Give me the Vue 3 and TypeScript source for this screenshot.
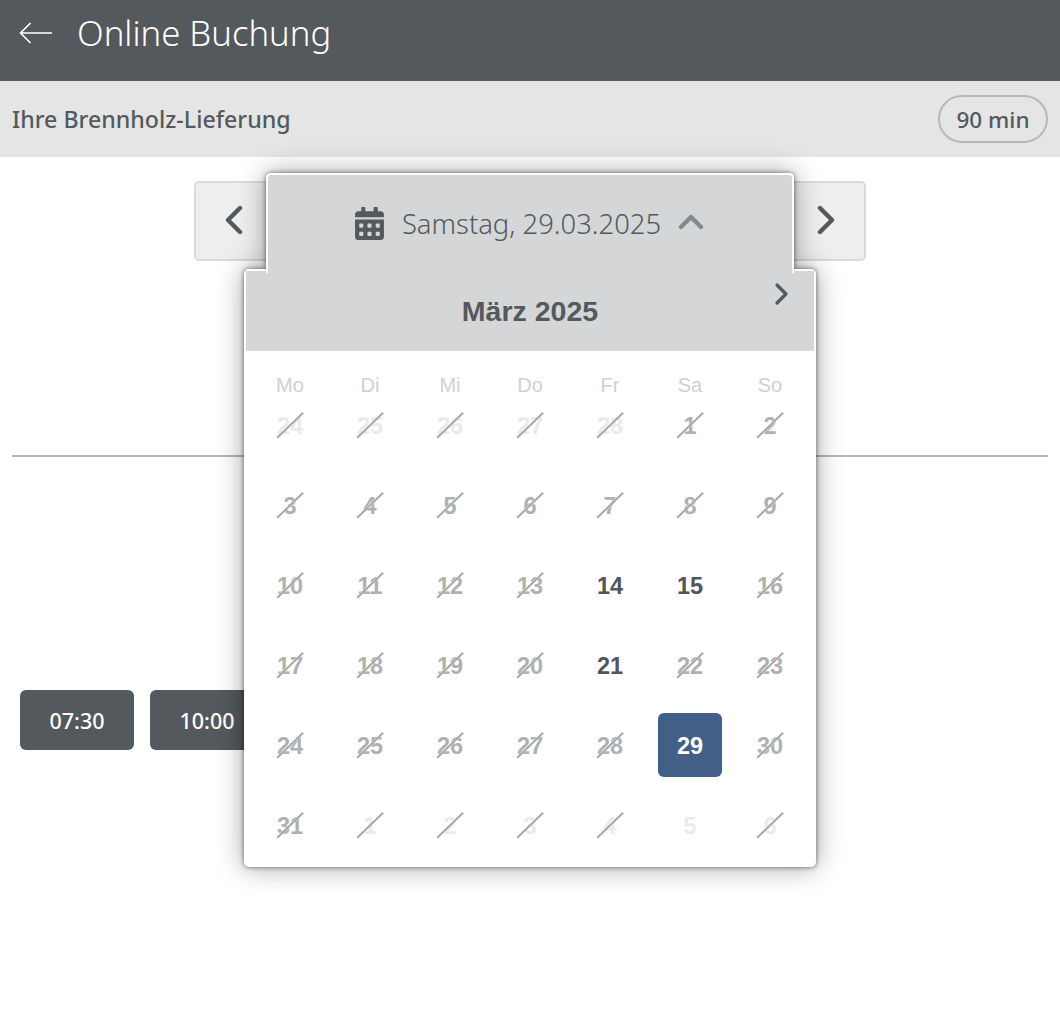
<script setup lang="ts">
type DayState = 'out' | 'off' | 'free' | 'selected'

interface Day {
  label: number
  state: DayState
  struck: boolean
}

const weekdays = ['Mo', 'Di', 'Mi', 'Do', 'Fr', 'Sa', 'So']
const times = ['07:30', '10:00']
const freeDays = [14, 15, 21]

const days: Day[] = []
for (const label of [24, 25, 26, 27, 28]) {
  days.push({ label, state: 'out', struck: true })
}
for (let label = 1; label <= 31; label++) {
  let state: DayState = 'off'
  if (freeDays.includes(label)) state = 'free'
  if (label === 29) state = 'selected'
  days.push({ label, state, struck: state === 'off' })
}
for (const label of [1, 2, 3, 4, 5, 6]) {
  days.push({ label, state: 'out', struck: label !== 5 })
}
</script>

<template>
  <div class="page">
    <header class="topbar">
      <svg class="back" width="34" height="24" viewBox="0 0 34 24" fill="none" stroke="#fff" stroke-width="1.6">
        <path d="M33 12H2M11.500 2 1.500 12l10 10" />
      </svg>
      <h1 class="title">Online Buchung</h1>
    </header>

    <div class="subbar">
      <span class="subbar__name">Ihre Brennholz-Lieferung</span>
      <span class="pill">90 min</span>
    </div>

    <div class="datenav">
      <button class="navbtn" type="button">
        <svg width="20" height="32" viewBox="0 0 20 32" fill="none" stroke="#53595c" stroke-width="4.400" stroke-linecap="round" stroke-linejoin="round">
          <path d="M16 3 4 15l12 12" />
        </svg>
      </button>

      <div class="picker">
        <div class="trigger">
          <svg width="29" height="33" viewBox="0 0 448 512" fill="#53595c">
            <path d="M0 464c0 26.500 21.500 48 48 48h352c26.500 0 48-21.500 48-48V192H0v272zm320-196c0-6.600 5.400-12 12-12h40c6.600 0 12 5.400 12 12v40c0 6.600-5.400 12-12 12h-40c-6.600 0-12-5.400-12-12v-40zm0 128c0-6.600 5.400-12 12-12h40c6.600 0 12 5.400 12 12v40c0 6.600-5.400 12-12 12h-40c-6.600 0-12-5.400-12-12v-40zM192 268c0-6.600 5.400-12 12-12h40c6.600 0 12 5.400 12 12v40c0 6.600-5.400 12-12 12h-40c-6.600 0-12-5.400-12-12v-40zm0 128c0-6.600 5.400-12 12-12h40c6.600 0 12 5.400 12 12v40c0 6.600-5.400 12-12 12h-40c-6.600 0-12-5.400-12-12v-40zM64 268c0-6.600 5.400-12 12-12h40c6.600 0 12 5.400 12 12v40c0 6.600-5.400 12-12 12H76c-6.600 0-12-5.400-12-12v-40zm0 128c0-6.600 5.400-12 12-12h40c6.600 0 12 5.400 12 12v40c0 6.600-5.400 12-12 12H76c-6.600 0-12-5.400-12-12v-40zM400 64h-48V16c0-8.800-7.200-16-16-16h-32c-8.800 0-16 7.200-16 16v48H160V16c0-8.800-7.200-16-16-16h-32c-8.800 0-16 7.200-16 16v48H48C21.500 64 0 85.500 0 112v48h448v-48c0-26.500-21.500-48-48-48z" />
          </svg>
          <span class="trigger__text">Samstag, 29.03.2025</span>
          <svg class="trigger__chevron" width="28" height="18" viewBox="0 0 28 18" fill="none" stroke="#84888a" stroke-width="4.400" stroke-linecap="round" stroke-linejoin="round">
            <path d="M4 14 14 4l10 10" />
          </svg>
        </div>

        <div class="calendar">
          <div class="calendar__head">
            <span class="calendar__month">März 2025</span>
            <svg class="calendar__next" width="16" height="24" viewBox="0 0 16 24" fill="none" stroke="#53595c" stroke-width="3.200" stroke-linecap="round" stroke-linejoin="round">
              <path d="M3 3l9 9-9 9" />
            </svg>
          </div>
          <div class="calendar__weekdays">
            <span v-for="w in weekdays" :key="w">{{ w }}</span>
          </div>
          <div class="calendar__grid">
            <div
              v-for="(d, i) in days"
              :key="i"
              class="day"
              :class="[`day--${d.state}`, { 'day--struck': d.struck }]"
            >
              <span class="day__num">{{ d.label }}</span>
            </div>
          </div>
        </div>
      </div>

      <button class="navbtn" type="button">
        <svg width="20" height="32" viewBox="0 0 20 32" fill="none" stroke="#53595c" stroke-width="4.400" stroke-linecap="round" stroke-linejoin="round">
          <path d="M4 3l12 12L4 27" />
        </svg>
      </button>
    </div>

    <hr class="divider" />

    <div class="times">
      <button v-for="t in times" :key="t" class="time" type="button">{{ t }}</button>
    </div>
  </div>
</template>

<style scoped>
.page {
  min-height: 1034px;
  background: #fff;
  font-family: "Noto Sans", "Open Sans", sans-serif;
  color: #53595c;
  overflow: hidden;
}

.topbar {
  display: flex;
  align-items: center;
  height: 81px;
  padding: 0 0 15px 19px;
  box-sizing: border-box;
  background: #53595c;
  color: #fff;
}

.back {
  margin-right: 24px;
}

.title {
  margin: 0;
  font-size: 34.700px;
  font-weight: 300;
  line-height: 1;
}

.subbar {
  display: flex;
  align-items: center;
  justify-content: space-between;
  height: 76px;
  padding: 0 12px;
  background: #e5e5e5;
}

.subbar__name {
  font-size: 23.200px;
  font-weight: 500;
}

.pill {
  display: flex;
  align-items: center;
  justify-content: center;
  box-sizing: border-box;
  width: 110px;
  height: 48px;
  border: 2px solid #b5b9bb;
  border-radius: 24px;
  font-size: 22.500px;
  font-weight: 500;
}

.datenav {
  display: flex;
  justify-content: center;
  height: 80px;
  margin-top: 24px;
}

.navbtn {
  display: flex;
  align-items: center;
  justify-content: center;
  width: 80px;
  height: 80px;
  padding: 0;
  border: 2px solid #dadada;
  border-radius: 5px;
  background: #eeeeee;
}

.picker {
  position: relative;
  z-index: 2;
  width: 528px;
  height: 80px;
  margin: 0 -8px;
}

.trigger {
  position: absolute;
  top: -8px;
  left: 0;
  z-index: 2;
  display: flex;
  align-items: center;
  justify-content: center;
  gap: 18px;
  box-sizing: border-box;
  width: 100%;
  height: 100px;
  padding-bottom: 2px;
  border: 2px solid #fff;
  border-bottom: 0;
  border-radius: 5px 5px 0 0;
  background: #d5d6d8;
}

.picker::before {
  content: "";
  position: absolute;
  top: -8px;
  left: 0;
  width: 100%;
  height: 96px;
  border-radius: 5px 5px 0 0;
  box-shadow: 0 0 28px rgba(0, 0, 0, 0.36), 0 0 5px rgba(0, 0, 0, 0.55);
}

.trigger__text {
  font-size: 27.400px;
  font-weight: 300;
}

.trigger__chevron {
  margin-left: -2px;
  margin-top: -2px;
}

.calendar {
  position: absolute;
  top: 88px;
  left: -22px;
  z-index: 1;
  box-sizing: border-box;
  width: 572px;
  height: 598px;
  border: 2px solid #fff;
  border-radius: 5px;
  background: #fff;
  box-shadow: 0 0 28px rgba(0, 0, 0, 0.36), 0 0 5px rgba(0, 0, 0, 0.55);
  font-family: "Liberation Sans", Arial, sans-serif;
}

.calendar__head {
  position: relative;
  display: flex;
  align-items: center;
  justify-content: center;
  height: 80px;
  background: #d5d6d8;
}

.calendar__month {
  font-size: 28.500px;
  font-weight: 700;
}

.calendar__next {
  position: absolute;
  top: 11px;
  right: 24px;
}

.calendar__weekdays,
.calendar__grid {
  display: grid;
  grid-template-columns: repeat(7, 80px);
  padding: 0 4px;
}

.calendar__weekdays {
  padding-top: 23px;
  line-height: 23px;
  text-align: center;
  font-size: 20px;
  color: #cfd0d1;
}

.calendar__grid {
  margin-top: -12px;
}

.day {
  position: relative;
  display: flex;
  align-items: center;
  justify-content: center;
  height: 80px;
  font-size: 23.500px;
  font-weight: 700;
}

.day--out {
  color: #e9eaeb;
}

.day--off {
  color: #aeb1b3;
}

.day--free {
  color: #50565a;
}

.day__num {
  padding-top: 2px;
}

.day--selected .day__num {
  display: flex;
  align-items: center;
  justify-content: center;
  box-sizing: border-box;
  width: 64px;
  height: 64px;
  border-radius: 6px;
  background: #415f87;
  color: #fff;
}

.day--struck::after {
  content: "";
  position: absolute;
  top: 50%;
  left: 50%;
  width: 36px;
  height: 1.500px;
  background: #a5a7a8;
  box-shadow: 0 0 0 0.500px rgba(255, 255, 255, 0.6);
  transform: translate(-50%, -50%) rotate(-44deg);
}

.divider {
  height: 2px;
  margin: 194px 12px 0;
  border: 0;
  background: #b5b6b7;
}

.times {
  display: flex;
  gap: 16px;
  margin-top: 233px;
  padding: 0 20px;
}

.time {
  width: 114px;
  height: 60px;
  border: 0;
  border-radius: 6px;
  background: #53595c;
  color: #fff;
  font-family: inherit;
  font-size: 21.500px;
  font-weight: 500;
}
</style>
